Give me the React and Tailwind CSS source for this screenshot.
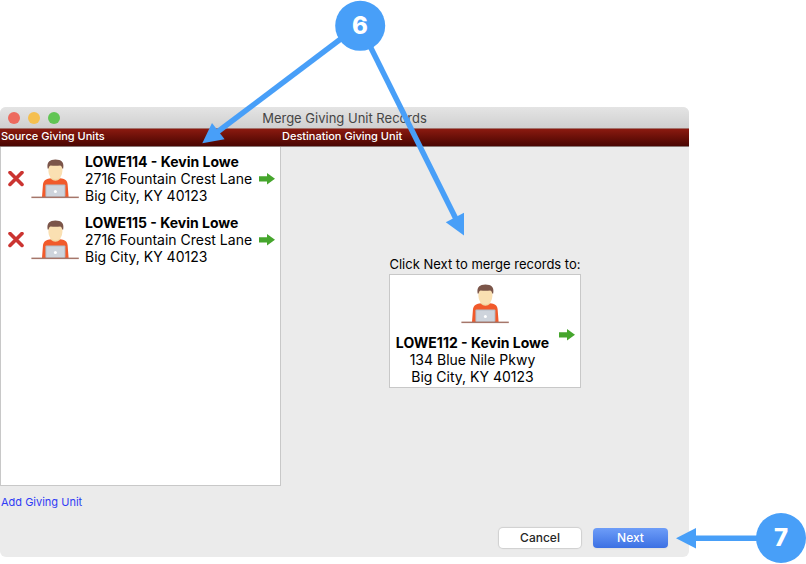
const sources = [
  { id: 'LOWE114', name: 'Kevin Lowe', street: '2716 Fountain Crest Lane', city: 'Big City, KY 40123' },
  { id: 'LOWE115', name: 'Kevin Lowe', street: '2716 Fountain Crest Lane', city: 'Big City, KY 40123' },
];

const destination = { id: 'LOWE112', name: 'Kevin Lowe', street: '134 Blue Nile Pkwy', city: 'Big City, KY 40123' };

const PersonIcon = () => (
  <svg className="h-10 w-12 shrink-0" viewBox="0 0 48 40" aria-hidden="true">
    <path d="M11 38 L12 25 Q12.8 20.6 17 19.8 L21 19 H28 L32 19.8 Q36 20.6 36.6 25 L37.6 38 Z" fill="#f15a2b" />
    <path d="M19.5 16 H29.3 V19.5 Q24.5 24 19.5 19.5 Z" fill="#f2d6a2" />
    <path d="M17.4 7 Q17.4 5 20 5 H29 Q31.4 5 31.4 7 V12 Q31 17.5 27.5 19.5 Q24.4 21 21.3 19.5 Q17.8 17.5 17.4 12 Z" fill="#fae0b2" />
    <path d="M16.6 9.5 Q15.8 4 18.3 2.2 Q20 0.6 24.4 0.6 Q29 0.6 30.6 2.2 Q33 4 32.2 9.5 L31.2 9.5 Q31 7 29.3 6.4 Q24.4 7.2 19.5 6.4 Q17.9 7 17.6 9.5 Z" fill="#7b5549" />
    <rect x="14.4" y="25.5" width="20" height="12.5" rx="1" fill="#b4bdc6" />
    <rect x="15.4" y="26.5" width="18" height="11.1" rx="0.5" fill="#ced4dc" />
    <circle cx="24.4" cy="32.4" r="1.5" fill="#fff" />
    <rect x="0.4" y="37.6" width="47.4" height="1.5" fill="#a5766a" />
  </svg>
);

const ArrowIcon = () => (
  <svg className="h-3 w-4" viewBox="0 0 16 12" aria-hidden="true">
    <path d="M0 3.2 H8 V0 L16 5.8 L8 11.6 V8.4 H0 Z" fill="#46a62d" />
  </svg>
);

const RemoveIcon = () => (
  <svg className="size-4" viewBox="0 0 16 16" aria-hidden="true">
    <path d="M2 1.4 L14 13.4 M14 1.4 L2 13.4" stroke="#cb3431" strokeWidth="3.6" strokeLinecap="round" />
  </svg>
);

const UnitText = ({ unit }) => (
  <div className="whitespace-nowrap text-[14px] leading-[17px] text-black">
    <div className="font-bold">{unit.id} - {unit.name}</div>
    <div>{unit.street}</div>
    <div>{unit.city}</div>
  </div>
);

const TitleBar = () => (
  <header className="flex h-[21px] items-center bg-linear-to-b from-[#e4e4e4] to-[#d0d0d0] px-2">
    <div className="flex flex-1 gap-2">
      <button aria-label="Close" className="size-3 rounded-full bg-[#ed6a5e]" />
      <button aria-label="Minimize" className="size-3 rounded-full bg-[#f5bf4f]" />
      <button aria-label="Zoom" className="size-3 rounded-full bg-[#61c554]" />
    </div>
    <h1 className="text-[13px] leading-5 text-[#454545]">Merge Giving Unit Records</h1>
    <div className="flex-1" />
  </header>
);

const Callouts = () => (
  <svg className="pointer-events-none absolute top-0 left-0 h-[564px] w-[806px]" viewBox="0 0 806 564">
    <g stroke="#489ff8" strokeWidth="5.4">
      <path d="M342 38 L216 133" />
      <path d="M370 46 L456 219" />
      <path d="M760 538.3 H694" />
    </g>
    <g fill="#489ff8">
      <path d="M202.3 143.2 L212 123 L224.6 139.3 Z" />
      <path d="M464 235.5 L445.8 222.3 L464 212.8 Z" />
      <path d="M676 538.3 L696 528 V548.6 Z" />
      <circle cx="360.2" cy="25.8" r="25" />
      <circle cx="781" cy="538" r="25" />
    </g>
    <g fill="#fff" textAnchor="middle" className="text-[24px] font-extrabold">
      <text x="360" y="34">6</text>
      <text x="781" y="546">7</text>
    </g>
  </svg>
);

export default function App() {
  return (
    <div className="relative flex min-h-screen flex-col bg-white pt-[107px] pr-[117px] pb-[7px] font-['Inter',sans-serif]">
      <main className="flex flex-1 flex-col overflow-hidden rounded-md bg-[#ebebeb]">
        <TitleBar />
        <div className="flex h-[19px] border-y border-t-[#a3716b] border-b-[#8a7775] bg-linear-to-b from-[#8b1a10] to-[#4a0603] text-[11px] leading-[14px] font-medium text-white">
          <h2 className="w-[281px] pl-px">Source Giving Units</h2>
          <h2 className="pl-px">Destination Giving Unit</h2>
        </div>

        <div className="flex flex-1">
          <section className="flex w-[281px] shrink-0 flex-col">
            <ul className="flex min-h-[339px] flex-col gap-[10px] border border-t-0 border-[#c8c8c8] bg-white pt-[6px] pr-[5px] pl-[7px]">
              {sources.map((unit) => (
                <li key={unit.id} className="flex items-center">
                  <button aria-label={`Remove ${unit.id}`}>
                    <RemoveIcon />
                  </button>
                  <div className="mr-1.5 ml-[7px]">
                    <PersonIcon />
                  </div>
                  <UnitText unit={unit} />
                  <button className="ml-auto" aria-label={`Open ${unit.id}`}>
                    <ArrowIcon />
                  </button>
                </li>
              ))}
            </ul>
            <a href="#add" className="mt-2 self-start pl-px text-[11px] leading-4 text-[#2f3cf5]">Add Giving Unit</a>
          </section>

          <section className="flex flex-1 flex-col items-center pt-[107px]">
            <p className="text-[13px] leading-5 text-black">Click Next to merge records to:</p>
            <div className="grid grid-cols-[auto_auto] justify-items-center gap-x-[10px] gap-y-[10px] border border-[#c8c8c8] bg-white pt-[9px] pr-[5px] pb-[2px] pl-[6px] text-center">
              <div className="col-span-2 col-start-1 row-start-1">
                <PersonIcon />
              </div>
              <div className="col-start-1 row-start-2">
                <UnitText unit={destination} />
              </div>
              <button className="col-start-2 row-span-2 row-start-1 self-center" aria-label={`Open ${destination.id}`}>
                <ArrowIcon />
              </button>
            </div>
          </section>
        </div>

        <footer className="flex justify-end gap-3 pr-[21px] pb-[9px] text-[12px] font-medium">
          <button className="h-5 w-[82px] rounded bg-white leading-5 text-[#262626] shadow-[0_0_1px_1px_rgba(0,0,0,0.12)]">Cancel</button>
          <button className="h-5 w-[75px] rounded bg-linear-to-b from-[#6e9df8] to-[#3c70e3] leading-5 text-white shadow-xs">Next</button>
        </footer>
      </main>
      <Callouts />
    </div>
  );
}
